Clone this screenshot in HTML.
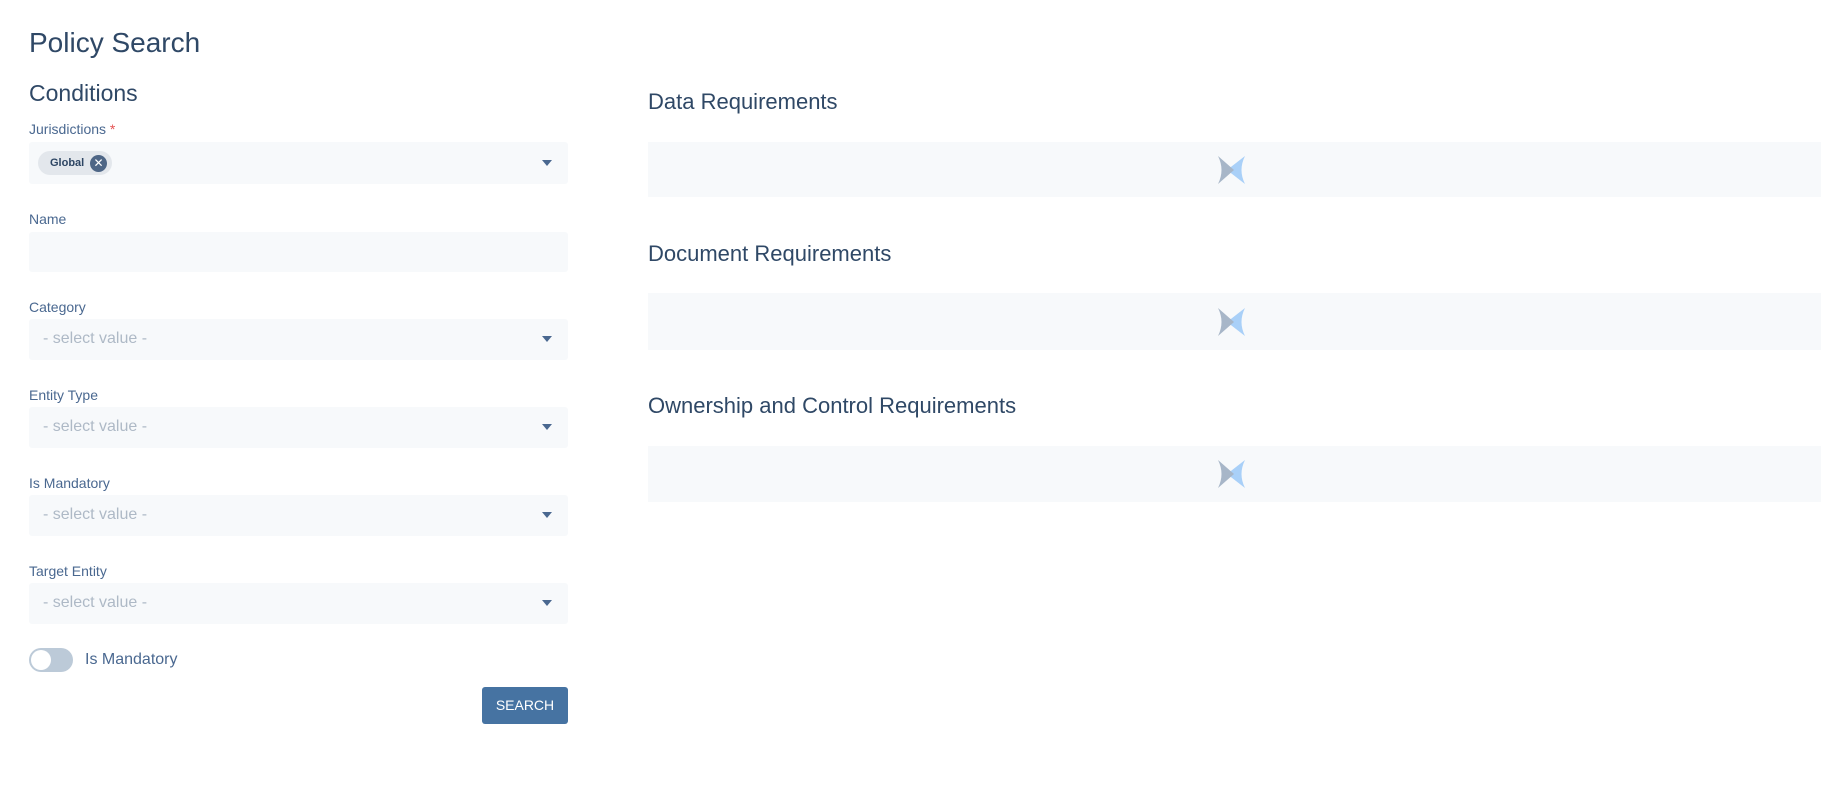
<!DOCTYPE html>
<html><head><meta charset="utf-8"><style>
*{box-sizing:border-box;margin:0;padding:0}
body{width:1840px;height:791px;background:#fff;font-family:"Liberation Sans",sans-serif;position:relative;overflow:hidden;color:#2d4563}
.a{position:absolute}
h1{position:absolute;left:29px;top:27px;font-size:28px;font-weight:normal;color:#2f4866}
.h2{font-size:23px;color:#2f4866}
.lbl{position:absolute;left:29px;font-size:14px;color:#4a6890}
.box{position:absolute;left:29px;width:539px;height:41px;background:#f7f9fb;border-radius:3px}
.ph{position:absolute;left:14px;top:11px;font-size:16px;color:#aeb9c6}
.car{position:absolute;right:16px;top:17px;width:0;height:0;border-left:5px solid transparent;border-right:5px solid transparent;border-top:6px solid #4a6890}
.rh{position:absolute;left:648px;font-size:22px;color:#2f4866}
.rbox{position:absolute;left:648px;width:1173px;background:#f7f9fb}
</style></head><body>
<h1>Policy Search</h1>
<div class="a h2" style="left:29px;top:80px">Conditions</div>
<div class="lbl" style="top:121px">Jurisdictions <span style="color:#e55353">*</span></div>
<div class="box" style="top:142px;height:42px">
 <div class="a" style="left:9px;top:9px;width:74px;height:24px;border-radius:12px;background:#e3e7ec;font-size:11px;font-weight:bold;color:#2d4563;padding:6px 0 0 12px">Global</div>
 <div class="a" style="left:61px;top:13px;width:17px;height:17px;border-radius:50%;background:#4e6686;color:#fff;font-size:12px;line-height:17px;text-align:center">✕</div>
 <div class="car" style="top:18px"></div>
</div>
<div class="lbl" style="top:211px">Name</div>
<div class="box" style="top:232px;height:40px"></div>
<div class="lbl" style="top:299px">Category</div>
<div class="box" style="top:319px"><div class="ph">- select value -</div><div class="car"></div></div>
<div class="lbl" style="top:387px">Entity Type</div>
<div class="box" style="top:407px"><div class="ph">- select value -</div><div class="car"></div></div>
<div class="lbl" style="top:475px">Is Mandatory</div>
<div class="box" style="top:495px"><div class="ph">- select value -</div><div class="car"></div></div>
<div class="lbl" style="top:563px">Target Entity</div>
<div class="box" style="top:583px"><div class="ph">- select value -</div><div class="car"></div></div>
<div class="a" style="left:29px;top:648px;width:44px;height:24px;border-radius:12px;background:#bccad8"><div class="a" style="left:2px;top:2px;width:20px;height:20px;border-radius:50%;background:#fff"></div></div>
<div class="a" style="left:85px;top:651px;font-size:16px;color:#4a6890">Is Mandatory</div>
<div class="a" style="left:482px;top:687px;width:86px;height:37px;background:#4673a2;border-radius:3px;color:#fff;font-size:14px;text-align:center;line-height:37px">SEARCH</div>

<div class="rh" style="top:89px">Data Requirements</div>
<div class="rbox" style="top:142px;height:55px"></div>
<div class="rh" style="top:241px">Document Requirements</div>
<div class="rbox" style="top:293px;height:57px"></div>
<div class="rh" style="top:393px">Ownership and Control Requirements</div>
<div class="rbox" style="top:446px;height:56px"></div>

<svg class="a" style="left:1218px;top:155px" width="28" height="31" viewBox="0 0 28 31"><path d="M27 1 Q20 15 27 29 L9 15Z" fill="#a9d0f8"/><path d="M0 1 L16 15 L0 29 Q7 15 0 1Z" fill="#a7b6c8"/></svg>
<svg class="a" style="left:1218px;top:307px" width="28" height="31" viewBox="0 0 28 31"><path d="M27 1 Q20 15 27 29 L9 15Z" fill="#a9d0f8"/><path d="M0 1 L16 15 L0 29 Q7 15 0 1Z" fill="#a7b6c8"/></svg>
<svg class="a" style="left:1218px;top:459px" width="28" height="31" viewBox="0 0 28 31"><path d="M27 1 Q20 15 27 29 L9 15Z" fill="#a9d0f8"/><path d="M0 1 L16 15 L0 29 Q7 15 0 1Z" fill="#a7b6c8"/></svg>
</body></html>
